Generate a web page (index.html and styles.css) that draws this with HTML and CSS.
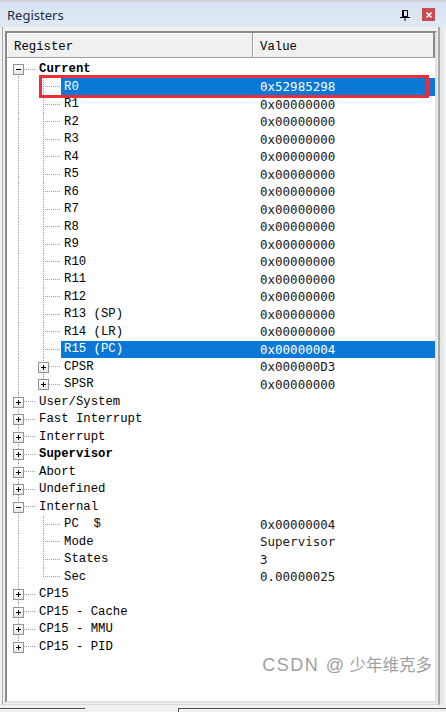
FILE: index.html
```html
<!DOCTYPE html>
<html>
<head>
<meta charset="utf-8">
<link rel="stylesheet" href="styles.css">
</head>
<body>
<div class="window">
  <div class="titlebar">
    <span class="title">Registers</span>
    <span class="tools">
      <svg class="pin" width="10" height="11" viewBox="0 0 10 11"><path d="M2.5 0.5h5v6h-5z" fill="none" stroke="#000"/><rect x="2" y="0" width="2" height="7" fill="#000"/><path d="M0 7.5h10" stroke="#000"/><path d="M5 7v4" stroke="#000"/></svg>
      <span class="close"><svg width="12" height="12" viewBox="0 0 12 12"><path d="M3.5 3.5l5 5M8.5 3.5l-5 5" stroke="#fff" stroke-width="1.6"/></svg></span>
    </span>
  </div>
  <div class="panel">
    <div class="list">
      <div class="header">
        <div class="hcell hname">Register</div>
        <div class="hcell hval">Value</div>
      </div>
      <div class="rows">
        <div class="row"><span class="e first"><i class="box minus"></i></span><span class="cells"><span class="name b">Current</span><span class="val"></span></span></div>
        <div class="row"><span class="v"></span><span class="e"></span><span class="cells sel"><span class="name">R0</span><span class="val">0x52985298</span></span></div>
        <div class="row"><span class="v"></span><span class="e"></span><span class="cells"><span class="name">R1</span><span class="val">0x00000000</span></span></div>
        <div class="row"><span class="v"></span><span class="e"></span><span class="cells"><span class="name">R2</span><span class="val">0x00000000</span></span></div>
        <div class="row"><span class="v"></span><span class="e"></span><span class="cells"><span class="name">R3</span><span class="val">0x00000000</span></span></div>
        <div class="row"><span class="v"></span><span class="e"></span><span class="cells"><span class="name">R4</span><span class="val">0x00000000</span></span></div>
        <div class="row"><span class="v"></span><span class="e"></span><span class="cells"><span class="name">R5</span><span class="val">0x00000000</span></span></div>
        <div class="row"><span class="v"></span><span class="e"></span><span class="cells"><span class="name">R6</span><span class="val">0x00000000</span></span></div>
        <div class="row"><span class="v"></span><span class="e"></span><span class="cells"><span class="name">R7</span><span class="val">0x00000000</span></span></div>
        <div class="row"><span class="v"></span><span class="e"></span><span class="cells"><span class="name">R8</span><span class="val">0x00000000</span></span></div>
        <div class="row"><span class="v"></span><span class="e"></span><span class="cells"><span class="name">R9</span><span class="val">0x00000000</span></span></div>
        <div class="row"><span class="v"></span><span class="e"></span><span class="cells"><span class="name">R10</span><span class="val">0x00000000</span></span></div>
        <div class="row"><span class="v"></span><span class="e"></span><span class="cells"><span class="name">R11</span><span class="val">0x00000000</span></span></div>
        <div class="row"><span class="v"></span><span class="e"></span><span class="cells"><span class="name">R12</span><span class="val">0x00000000</span></span></div>
        <div class="row"><span class="v"></span><span class="e"></span><span class="cells"><span class="name">R13 (SP)</span><span class="val">0x00000000</span></span></div>
        <div class="row"><span class="v"></span><span class="e"></span><span class="cells"><span class="name">R14 (LR)</span><span class="val">0x00000000</span></span></div>
        <div class="row"><span class="v"></span><span class="e"></span><span class="cells sel"><span class="name">R15 (PC)</span><span class="val">0x00000004</span></span></div>
        <div class="row"><span class="v"></span><span class="e"><i class="box plus"></i></span><span class="cells"><span class="name">CPSR</span><span class="val">0x000000D3</span></span></div>
        <div class="row"><span class="v"></span><span class="e last"><i class="box plus"></i></span><span class="cells"><span class="name">SPSR</span><span class="val">0x00000000</span></span></div>
        <div class="row"><span class="e"><i class="box plus"></i></span><span class="cells"><span class="name">User/System</span><span class="val"></span></span></div>
        <div class="row"><span class="e"><i class="box plus"></i></span><span class="cells"><span class="name">Fast Interrupt</span><span class="val"></span></span></div>
        <div class="row"><span class="e"><i class="box plus"></i></span><span class="cells"><span class="name">Interrupt</span><span class="val"></span></span></div>
        <div class="row"><span class="e"><i class="box plus"></i></span><span class="cells"><span class="name b">Supervisor</span><span class="val"></span></span></div>
        <div class="row"><span class="e"><i class="box plus"></i></span><span class="cells"><span class="name">Abort</span><span class="val"></span></span></div>
        <div class="row"><span class="e"><i class="box plus"></i></span><span class="cells"><span class="name">Undefined</span><span class="val"></span></span></div>
        <div class="row"><span class="e"><i class="box minus"></i></span><span class="cells"><span class="name">Internal</span><span class="val"></span></span></div>
        <div class="row"><span class="v"></span><span class="e"></span><span class="cells"><span class="name">PC  $</span><span class="val">0x00000004</span></span></div>
        <div class="row"><span class="v"></span><span class="e"></span><span class="cells"><span class="name">Mode</span><span class="val">Supervisor</span></span></div>
        <div class="row"><span class="v"></span><span class="e"></span><span class="cells"><span class="name">States</span><span class="val">3</span></span></div>
        <div class="row"><span class="v"></span><span class="e last"></span><span class="cells"><span class="name">Sec</span><span class="val">0.00000025</span></span></div>
        <div class="row"><span class="e"><i class="box plus"></i></span><span class="cells"><span class="name">CP15</span><span class="val"></span></span></div>
        <div class="row"><span class="e"><i class="box plus"></i></span><span class="cells"><span class="name">CP15 - Cache</span><span class="val"></span></span></div>
        <div class="row"><span class="e"><i class="box plus"></i></span><span class="cells"><span class="name">CP15 - MMU</span><span class="val"></span></span></div>
        <div class="row"><span class="e last"><i class="box plus"></i></span><span class="cells"><span class="name">CP15 - PID</span><span class="val"></span></span></div>
      </div>
      <div class="mark"></div>
      <div class="watermark"><span class="wm-latin">CSDN @</span><span class="wm-cjk">少年维克多</span></div>
    </div>
  </div>
  <div class="tabs"><span class="tab t1"></span><span class="tab t2"></span><span class="tab t3"></span></div>
</div>
</body>
</html>
```

FILE: styles.css
```css
html, body {
  margin: 0;
  padding: 0;
  background: #ffffff;
}

.window {
  width: 446px;
  height: 712px;
  display: flex;
  flex-direction: column;
  overflow: hidden;
  background: #f0f0f0;
}

.titlebar {
  height: 27px;
  box-sizing: border-box;
  border-top: 2px solid #d0d0d0;
  background: linear-gradient(#d6e2f2, #e0e9f5);
  display: flex;
  align-items: center;
  padding: 0 11px 0 7px;
  flex: none;
}

.title {
  font-family: "Noto Sans", "Liberation Sans", sans-serif;
  font-size: 13px;
  color: #1e2d42;
}

.tools {
  margin-left: auto;
  display: flex;
  align-items: center;
  gap: 12px;
}

.pin {
  display: block;
  margin-top: 1px;
}

.close {
  width: 13px;
  height: 13px;
  background: #c94c4c;
  display: flex;
  align-items: center;
  justify-content: center;
}

.close svg {
  display: block;
}

.panel {
  flex: 1;
  display: flex;
  flex-direction: column;
  margin: 0 6px 0 2px;
  padding: 4px 1px 1px 2px;
  border-left: 1px solid #a8a8a8;
  border-right: 2px solid #a8a8a8;
  border-bottom: 1px solid #d8d8d8;
  box-shadow: 3px 0 0 #e6e6e6;
  min-height: 0;
}

.list {
  flex: 1;
  position: relative;
  background: #ffffff;
  border: 2px solid;
  border-color: #8a8a8a #e2e2e2 #e2e2e2 #8a8a8a;
  display: flex;
  flex-direction: column;
  min-height: 0;
}

.header {
  display: flex;
  height: 25px;
  flex: none;
  background: #f0f0f0;
  font-family: "Liberation Mono", monospace;
  font-size: 12.3px;
  color: #000;
}

.hcell {
  display: flex;
  align-items: center;
  box-sizing: border-box;
  padding: 3px 0 0 7px;
  border-bottom: 1px solid #a0a0a0;
  box-shadow: inset 1px 1px 0 #ffffff;
}

.hname {
  width: 246px;
  border-right: 1px solid #9a9a9a;
}

.hval {
  flex: 1;
  border-right: 2px solid #8a8a8a;
}

.rows {
  padding-top: 2.5px;
}

.row {
  display: flex;
  height: 17.5px;
  align-items: stretch;
}

.v {
  width: 25px;
  flex: none;
  background: repeating-linear-gradient(to bottom, #a0a0a0 0 1px, transparent 1px 2px) 11px 0 / 1px 100% no-repeat;
}

.e {
  width: 29px;
  flex: none;
  box-sizing: border-box;
  padding-left: 6px;
  display: flex;
  align-items: center;
  background:
    repeating-linear-gradient(to right, #a0a0a0 0 1px, transparent 1px 2px) 11px 8px / 18px 1px no-repeat,
    repeating-linear-gradient(to bottom, #a0a0a0 0 1px, transparent 1px 2px) 11px 0 / 1px 100% no-repeat;
}

.e.first {
  background:
    repeating-linear-gradient(to right, #a0a0a0 0 1px, transparent 1px 2px) 11px 8px / 18px 1px no-repeat,
    repeating-linear-gradient(to bottom, #a0a0a0 0 1px, transparent 1px 2px) 11px 9px / 1px 9px no-repeat;
}

.e.last {
  background:
    repeating-linear-gradient(to right, #a0a0a0 0 1px, transparent 1px 2px) 11px 8px / 18px 1px no-repeat,
    repeating-linear-gradient(to bottom, #a0a0a0 0 1px, transparent 1px 2px) 11px 0 / 1px 9px no-repeat;
}

.box {
  display: block;
  width: 11px;
  height: 11px;
  box-sizing: border-box;
  border: 1px solid #929292;
  margin-top: 0.5px;
}

.box.minus {
  background:
    linear-gradient(#000, #000) center / 5px 1px no-repeat,
    linear-gradient(#ffffff, #e6e6e6);
}

.box.plus {
  background:
    linear-gradient(#000, #000) center / 5px 1px no-repeat,
    linear-gradient(#000, #000) center / 1px 5px no-repeat,
    linear-gradient(#ffffff, #e6e6e6);
}

.cells {
  flex: 1;
  display: flex;
  align-items: center;
  color: #000;
}

.cells.sel {
  background: #0a78d7;
  color: #ffffff;
}

.name {
  flex: 1;
  padding-left: 3px;
  font-family: "Liberation Mono", monospace;
  font-size: 12.3px;
  white-space: pre;
}

.name.b {
  font-weight: bold;
}

.val {
  width: 178px;
  flex: none;
  box-sizing: border-box;
  padding-left: 3px;
  font-family: "DejaVu Sans Mono", monospace;
  font-size: 12.5px;
  color: #1a1a1a;
}

.sel .val {
  color: #ffffff;
}

.mark {
  position: absolute;
  left: 32px;
  top: 42px;
  width: 390px;
  height: 23px;
  box-sizing: border-box;
  border: 3px solid #ec2f37;
}

.watermark {
  position: absolute;
  right: 3px;
  bottom: 25px;
  color: #a0a0a0;
  white-space: pre;
}

.wm-latin {
  font-family: "Liberation Sans", sans-serif;
  font-size: 18px;
  letter-spacing: 1.5px;
  margin-right: 4px;
}

.wm-cjk {
  font-family: "Noto Sans CJK SC", sans-serif;
  font-size: 16.5px;
}

.tabs {
  height: 7px;
  flex: none;
  display: flex;
  padding-top: 3px;
  box-sizing: border-box;
  background: #f0f0f0;
}

.tab {
  height: 4px;
  box-sizing: border-box;
}

.t1 {
  width: 85px;
  border-top: 1px solid #505050;
}

.t2 {
  width: 93px;
}

.t3 {
  flex: 1;
  border-top: 1px solid #505050;
  border-left: 1px solid #505050;
}
```
